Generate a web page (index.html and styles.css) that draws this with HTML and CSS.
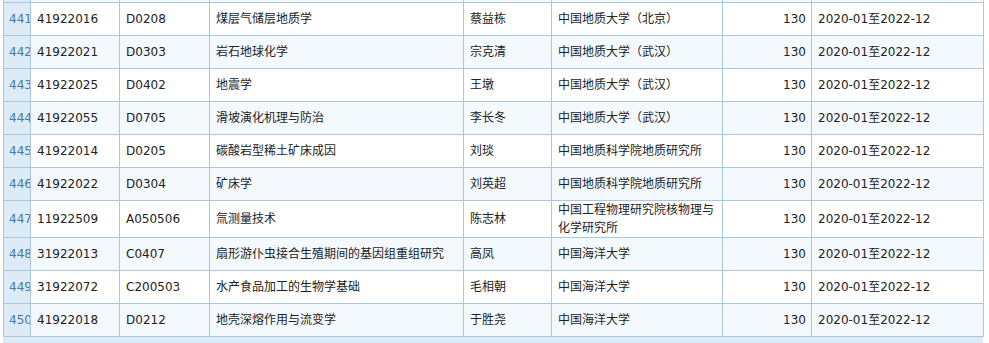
FILE: index.html
```html
<!DOCTYPE html>
<html lang="zh">
<head>
<meta charset="utf-8">
<link rel="stylesheet" href="styles.css">
</head>
<body>
<div class="grid-wrap">
<table class="grid">
<colgroup>
<col class="c-no"><col class="c-id"><col class="c-code"><col class="c-title"><col class="c-name"><col class="c-org"><col class="c-amt"><col class="c-date">
</colgroup>
<tbody>
<tr class="stub even"><td class="no"></td><td></td><td></td><td></td><td></td><td></td><td></td><td></td></tr>
<tr><td class="no">441</td><td>41922016</td><td>D0208</td><td>煤层气储层地质学</td><td>蔡益栋</td><td>中国地质大学（北京）</td><td class="amt">130</td><td>2020-01至2022-12</td></tr>
<tr class="even"><td class="no">442</td><td>41922021</td><td>D0303</td><td>岩石地球化学</td><td>宗克清</td><td>中国地质大学（武汉）</td><td class="amt">130</td><td>2020-01至2022-12</td></tr>
<tr><td class="no">443</td><td>41922025</td><td>D0402</td><td>地震学</td><td>王墩</td><td>中国地质大学（武汉）</td><td class="amt">130</td><td>2020-01至2022-12</td></tr>
<tr class="even"><td class="no">444</td><td>41922055</td><td>D0705</td><td>滑坡演化机理与防治</td><td>李长冬</td><td>中国地质大学（武汉）</td><td class="amt">130</td><td>2020-01至2022-12</td></tr>
<tr><td class="no">445</td><td>41922014</td><td>D0205</td><td>碳酸岩型稀土矿床成因</td><td>刘琰</td><td>中国地质科学院地质研究所</td><td class="amt">130</td><td>2020-01至2022-12</td></tr>
<tr class="even"><td class="no">446</td><td>41922022</td><td>D0304</td><td>矿床学</td><td>刘英超</td><td>中国地质科学院地质研究所</td><td class="amt">130</td><td>2020-01至2022-12</td></tr>
<tr><td class="no">447</td><td>11922509</td><td>A050506</td><td>氚测量技术</td><td>陈志林</td><td>中国工程物理研究院核物理与化学研究所</td><td class="amt">130</td><td>2020-01至2022-12</td></tr>
<tr class="even"><td class="no">448</td><td>31922013</td><td>C0407</td><td>扇形游仆虫接合生殖期间的基因组重组研究</td><td>高凤</td><td>中国海洋大学</td><td class="amt">130</td><td>2020-01至2022-12</td></tr>
<tr><td class="no">449</td><td>31922072</td><td>C200503</td><td>水产食品加工的生物学基础</td><td>毛相朝</td><td>中国海洋大学</td><td class="amt">130</td><td>2020-01至2022-12</td></tr>
<tr class="even"><td class="no">450</td><td>41922018</td><td>D0212</td><td>地壳深熔作用与流变学</td><td>于胜尧</td><td>中国海洋大学</td><td class="amt">130</td><td>2020-01至2022-12</td></tr>
</tbody>
</table>
<div class="grid-foot"></div>
</div>
</body>
</html>
```
FILE: styles.css
```css
html, body {
  margin: 0;
  padding: 0;
  background: #ffffff;
}
body {
  height: 343px;
  overflow: hidden;
}
.grid-wrap {
  padding-left: 3px;
  width: 980px;
}
.grid {
  border-collapse: collapse;
  table-layout: fixed;
  width: 980px;
  font-family: "DejaVu Sans", "Noto Sans CJK SC", sans-serif;
  font-size: 12px;
  color: #222222;
}
.c-no { width: 27px; }
.c-id { width: 89px; }
.c-code { width: 90px; }
.c-title { width: 254px; }
.c-name { width: 88px; }
.c-org { width: 171px; }
.c-amt { width: 89px; }
.c-date { width: 172px; }
.grid td {
  border: 1px solid #a9c7de;
  height: 32px;
  padding: 0 5px 0 6px;
  line-height: 18px;
  overflow: hidden;
  white-space: normal;
  vertical-align: middle;
  word-break: break-all;
}
.grid tr.even td {
  background: #f4f9fe;
}
.grid td.no,
.grid tr.even td.no {
  background: #dcebf6;
  color: #4a79a3;
  padding: 0 0 0 5px;
  white-space: nowrap;
  text-overflow: clip;
}
.grid td.amt {
  text-align: right;
}
.grid tr.stub td {
  height: 2px;
  border-top: 0;
}
.grid-foot {
  height: 6px;
  background: #dcebf6;
  border-top: 1px solid #a9c7de;
  margin-top: -1px;
}
```
